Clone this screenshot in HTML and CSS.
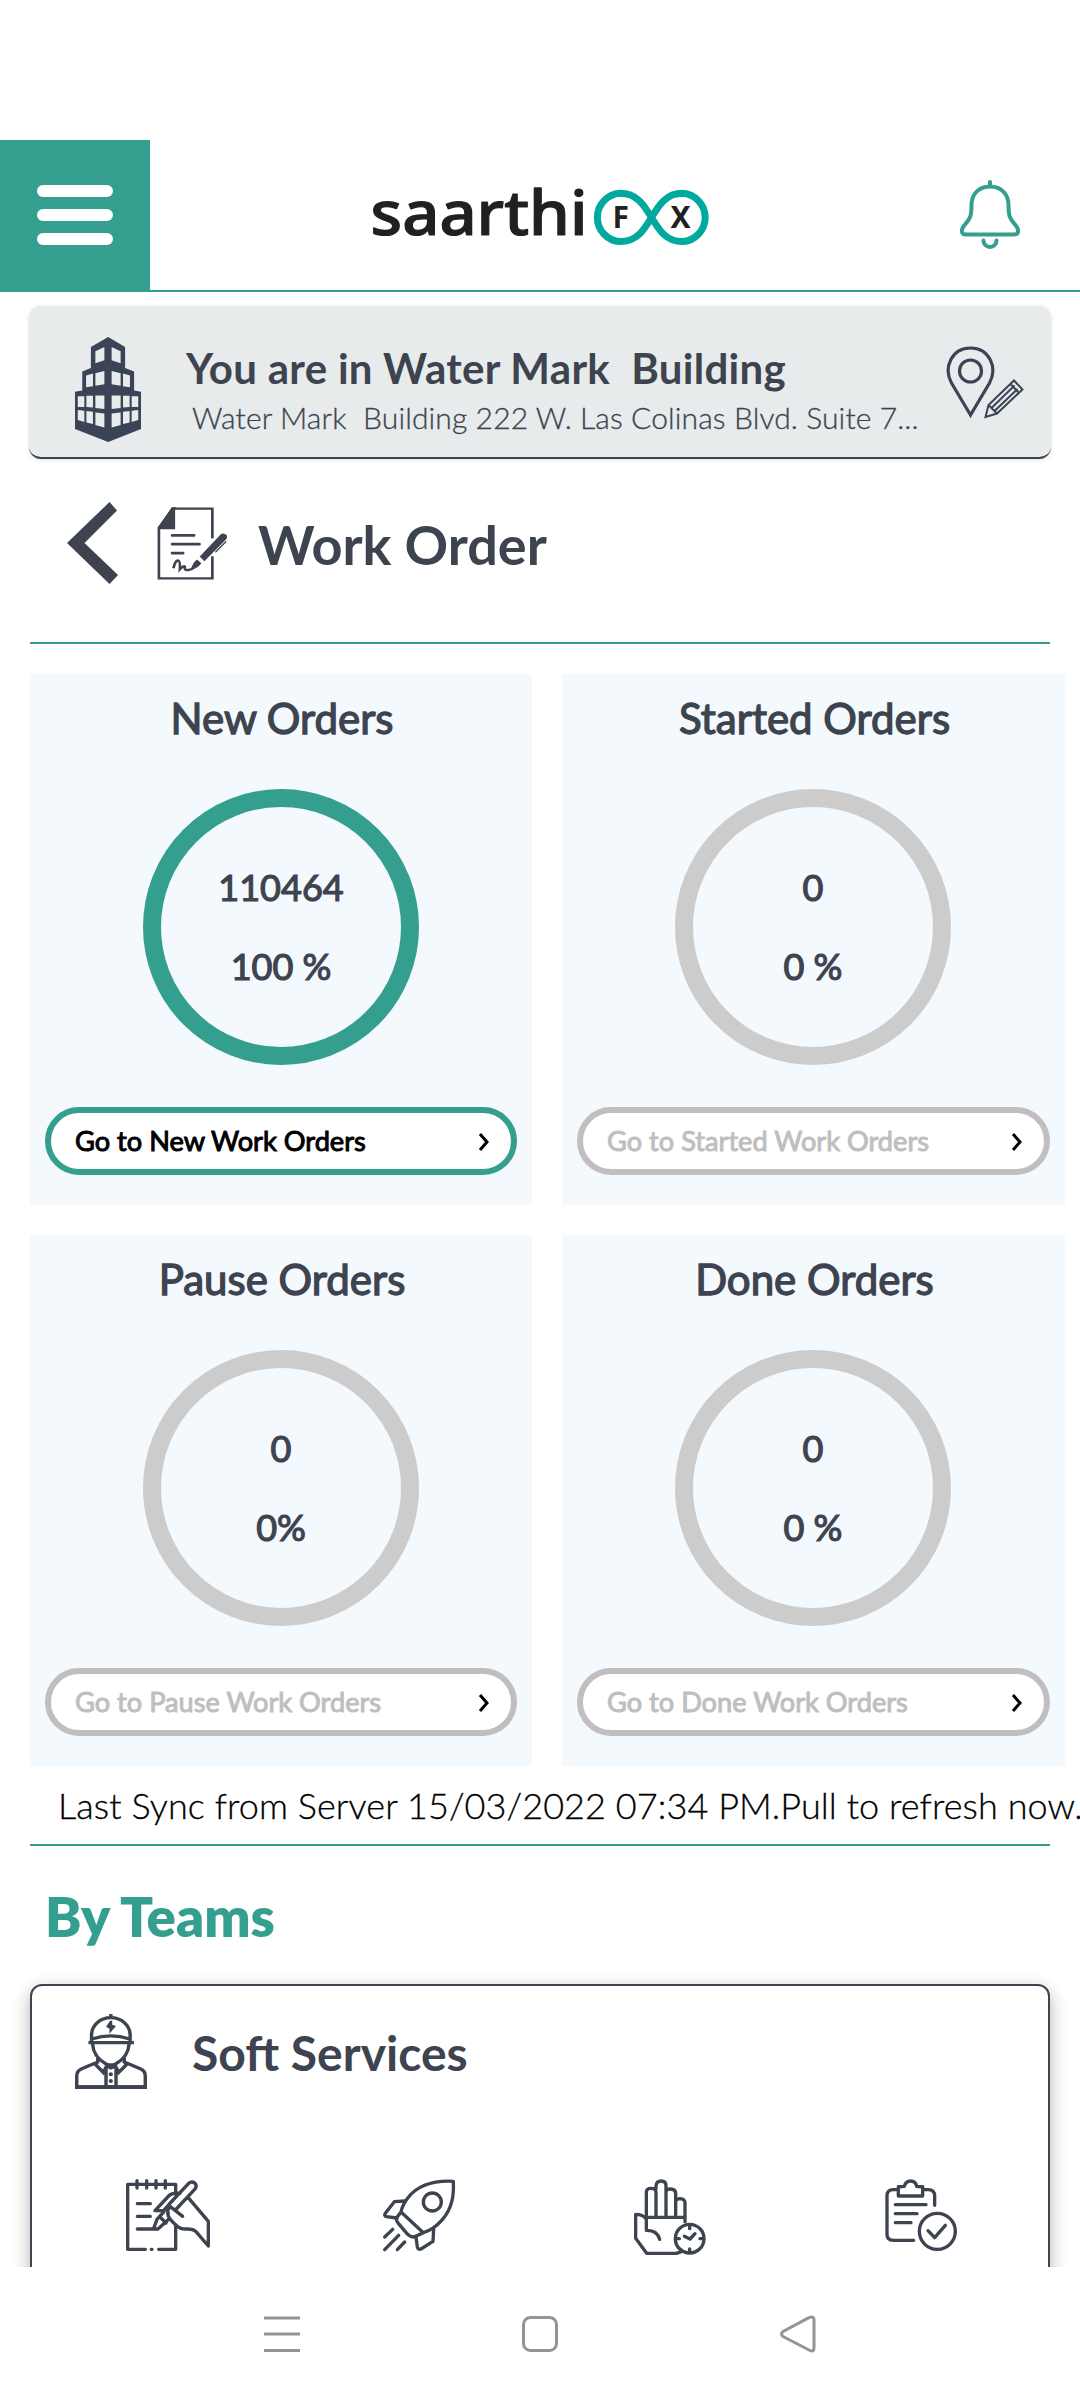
FILE: index.html
```html
<!DOCTYPE html>
<html lang="en">
<head>
<meta charset="utf-8">
<title>Work Order</title>
<link rel="stylesheet" href="styles.css">
</head>
<body>
<div class="app">
  <header class="topbar">
    <button class="menu" aria-label="Menu"><span></span><span></span><span></span></button>
    <svg class="logo" viewBox="366 180 350 72">
      <text class="logo-word" x="370.500" y="235.5" textLength="217" lengthAdjust="spacingAndGlyphs">saarthi</text>
      <path class="logo-loop" d="M651.5 218.5C644 206 637 194.300 620 194.300A24.200 24.200 0 0 0 620 242.600C637 242.600 644 231 651.500 218.500C659 206 666 194.300 682.500 194.300A24.200 24.200 0 0 1 682.500 242.600C666 242.600 659 231 651.500 218.500Z"/>
      <text class="logo-letter" x="612.5" y="229">F</text>
      <text class="logo-letter" x="670.5" y="229">X</text>
    </svg>
    <svg class="bell" viewBox="0 0 60 70">
      <path d="M30 2V6M30 6.500C18 6.500 11.500 15 11.500 25C11.500 35 10.500 39 5 44.500C0 50 1.500 54.500 6 54.500H54C58.500 54.500 60 50 55 44.500C49.500 39 48.500 35 48.500 25C48.500 15 42 6.500 30 6.500Z"/>
      <path d="M23.500 60.500A6.500 6.500 0 0 0 36.500 60.500"/>
    </svg>
  </header>

  <main class="content">
    <section class="location">
      <svg class="tower" viewBox="218 620 191 316" preserveAspectRatio="none">
        <path class="ink" d="M314 620L363 650V713L389 724V781L409 785V897L314 936L218 897V785L239 781V724L264 713V650Z"/>
        <path class="pane" d="M277 663L303 650V690L277 699ZM324 650L350 663V699L324 690ZM250 736L270 730V768L250 771ZM277 729L303 722V762L277 767ZM324 722L350 729V767L324 762ZM357 730L377 736V771L357 768ZM226 798H245V831H226ZM251 797H270V832L251 831ZM277 796H303V837L277 834ZM324 796H350V834L324 837ZM357 797H376V831L357 832ZM382 798H401V831H382ZM226 840L245 842V876L226 870ZM251 843L270 845V882L251 877ZM277 847L303 850V892L277 885ZM324 850L350 847V885L324 892ZM357 845L376 843V877L357 882ZM382 842L401 840V870L382 876Z"/>
      </svg>
      <div class="location-text">
        <h2>You are in Water Mark  Building</h2>
        <p>Water Mark  Building 222 W. Las Colinas Blvd. Suite 7...</p>
      </div>
      <svg class="pin" viewBox="0 0 78 72">
        <path class="thick" d="M24.500 69L5.500 37C-3 21 6 2 24.500 2S52 21 43.500 37Z"/>
        <circle class="thick" cx="24.500" cy="25" r="11"/>
        <path d="M39.500 71L42.500 59L68 34.500L76.500 43.500L51 67.500ZM42.500 59L51 67.500M64.500 38L73 47M68 40L45.500 62M71 43.500L48.500 65"/>
      </svg>
    </section>

    <section class="page-title">
      <svg class="back" viewBox="0 0 51 82"><path d="M0 41L42.500 0L50 8.500L17.500 41L51 73L42.500 82Z"/></svg>
      <svg class="doc" viewBox="409 110 186 218" preserveAspectRatio="none">
        <path class="line" d="M554 203V115H450L414 172V323H554V257M414 173H453V116"/>
        <path class="fill" d="M410 174L448 111H460Q453 120 453 130V174Z"/>
        <path class="bar" d="M449 195H506M449 221H520M449 248H477"/>
        <path class="line" d="M452 293Q457 268 465 270Q470 272 469 296Q479 284 482 288Q480 300 490 298Q499 299 506 290"/>
        <path class="fill" d="M497 298Q503 275 514 267L525 278Q516 294 497 298ZM521 258L577 191Q583 186 592 194Q594 202 589 208L533 272Z"/>
        <path class="clip" d="M563 244L589 214"/>
      </svg>
      <h1>Work Order</h1>
    </section>
    <hr class="rule">

    <section class="orders">
      <article class="order active">
        <h3>New Orders</h3>
        <div class="ring"><span>110464</span><span>100 %</span></div>
        <a class="go">Go to New Work Orders<svg viewBox="0 0 12 20"><path d="M2 2L9 10L2 18"/></svg></a>
      </article>
      <article class="order">
        <h3>Started Orders</h3>
        <div class="ring"><span>0</span><span>0 %</span></div>
        <a class="go">Go to Started Work Orders<svg viewBox="0 0 12 20"><path d="M2 2L9 10L2 18"/></svg></a>
      </article>
      <article class="order">
        <h3>Pause Orders</h3>
        <div class="ring"><span>0</span><span>0%</span></div>
        <a class="go">Go to Pause Work Orders<svg viewBox="0 0 12 20"><path d="M2 2L9 10L2 18"/></svg></a>
      </article>
      <article class="order">
        <h3>Done Orders</h3>
        <div class="ring"><span>0</span><span>0 %</span></div>
        <a class="go">Go to Done Work Orders<svg viewBox="0 0 12 20"><path d="M2 2L9 10L2 18"/></svg></a>
      </article>
    </section>

    <p class="sync">Last Sync from Server 15/03/2022 07:34 PM.Pull to refresh now.</p>
    <hr class="rule">
    <h2 class="teams-title">By Teams</h2>

    <section class="team">
      <div class="team-head">
        <svg class="worker" viewBox="218 822 209 225" preserveAspectRatio="none">
          <path class="line" d="M266 908V885A56 52 0 0 1 378 885V908M267 897Q322 878 377 897M257 908H389M269 912Q271 950 308 972Q322 978 336 972Q373 950 375 912M322 822V832"/>
          <path class="line" d="M284 954V966L236 987Q223 993 223 1008V1041H422V1008Q422 993 409 987L361 966V954M285 962L278 974L300 997L310 978L322 984L335 978L345 997L367 974L360 962M308 985V1040M337 985V1040"/>
          <path class="fill" d="M320 842L308 860L318 866V881L337 858L326 854V842ZM218 1036H427V1047H218Z"/>
          <circle class="fill" cx="322" cy="1003" r="6"/><circle class="fill" cx="322" cy="1023" r="6"/>
        </svg>
        <h3>Soft Services</h3>
      </div>
      <div class="stages">
        <svg viewBox="78 86 252 228" class="stage">
          <path d="M136 297H83V102H227V128M227 224V297H176M154 297H156M111 91V113M140 91V113M168 91V113M196 91V113M112 160H151M112 198H151M112 236H174L206 207"/>
          <path d="M229 176L286 115Q292 105 284 98Q275 92 266 99L208 161L191 181H165L206 137Q215 127 240 129M192 184L171 207L161 234M183 203L198 218M205 190Q199 180 211 169L248 198M203 190Q205 205 230 226Q240 237 259 236Q279 235 288 244L325 287V213L264 141"/>
        </svg>
        <svg viewBox="849 86 216 228" class="stage narrow">
          <path d="M1060 93C1000 90 954 104 924 142Q907 163 903 185L891 201Q886 208 895 219L923 252Q936 264 947 258L970 247Q1000 239 1027 208C1057 173 1062 135 1060 93ZM903 185L970 247"/>
          <circle cx="997" cy="155" r="27"/>
          <path d="M915 152L883 154L856 189Q851 196 859 199L891 203M1001 236L999 273L963 296Q954 299 952 290L948 260M878 237L854 260M896 255L854 298M914 275L892 298"/>
        </svg>
        <svg viewBox="102 86 216 228" class="stage narrow">
          <path d="M139 237V126Q139 114 153 114Q168 114 168 126V199M168 116V106Q170 92 183 92Q198 92 198 106V199M198 122Q202 116 211 116Q227 116 227 130V199M228 150Q232 145 240 145Q255 146 255 158V214M139 201H255M139 207Q130 192 107 192V264L140 309H229L244 304M139 240Q172 239 179 267"/>
          <circle cx="269" cy="265" r="43"/>
          <path d="M269 225V235M269 296V306M229 265H238M300 265H310M253 258L270 266L285 250"/>
        </svg>
        <svg viewBox="855 86 216 228" class="stage narrow">
          <path d="M893 118H880Q861 118 861 137V252Q861 270 880 270H941M970 118H984Q1004 118 1004 137V165M895 109Q900 110 913 108Q917 92 932 92Q947 92 950 108Q960 110 968 109V137H895ZM886 163H978M886 190H951M886 217H933"/>
          <circle cx="1012" cy="243" r="54"/>
          <path d="M984 241L1004 262L1036 225"/>
        </svg>
      </div>
    </section>
  </main>

  <nav class="sysnav">
    <svg viewBox="0 0 36 36"><path d="M0 2H36M0 18H36M0 34.500H36"/></svg>
    <svg viewBox="0 0 36 36"><rect x="1.500" y="1.500" width="33" height="33" rx="7"/></svg>
    <svg viewBox="0 0 36 36"><path d="M3 15.500L29 1.600Q34 -.5 34 4V32Q34 36.500 29 34L3 20.500Q0 18 3 15.500Z"/></svg>
  </nav>
</div>
</body>
</html>
```
FILE: styles.css
```css
* { box-sizing: border-box; }

body {
  margin: 0;
  background: #fff;
  color: #3d434f;
  font-family: Lato, "Liberation Sans", sans-serif;
  line-height: 1.2;
}

h1, h2, h3, p { margin: 0; }

svg {
  display: block;
  flex: none;
  overflow: visible;
  fill: none;
  stroke-linecap: round;
  stroke-linejoin: round;
}

.app {
  display: flex;
  flex-direction: column;
  width: 1080px;
  height: 2400px;
  padding-top: 140px;
  overflow: hidden;
}

/* Top bar */
.topbar {
  display: flex;
  flex: none;
  align-items: center;
  height: 152px;
  border-bottom: 2px solid #349f8e;
}

.menu {
  display: flex;
  flex-direction: column;
  justify-content: center;
  gap: 12px;
  width: 150px;
  height: 150px;
  padding: 0 37px;
  border: 0;
  background: #349f8e;
}

.menu span {
  height: 12px;
  border-radius: 6px;
  background: #fff;
}

.logo {
  width: 350px;
  height: 72px;
  margin-left: 216px;
}

.logo-word {
  fill: #231f20;
  stroke: #231f20;
  stroke-width: 1.2px;
  font: 500 62px "Noto Sans", sans-serif;
}

.logo-loop { stroke: #00a99d; stroke-width: 7px; }

.logo-letter {
  fill: #231f20;
  font: 700 30px "Noto Sans", sans-serif;
}

.bell {
  width: 60px;
  height: 70px;
  margin-left: 244px;
  stroke: #349f8e;
  stroke-width: 4px;
}

/* Scroll area */
.content {
  flex: 1;
  min-height: 0;
  padding-top: 14px;
  overflow: hidden;
}

.location {
  display: flex;
  height: 153px;
  margin: 0 29px;
  padding-left: 46px;
  border-bottom: 2px solid #3b4252;
  border-radius: 12px;
  background: #e7ebec;
  box-shadow: 0 1px 4px rgba(0, 0, 0, .12);
}

.tower { width: 66px; height: 105px; margin-top: 31px; }
.tower .ink { fill: #3b4456; }
.tower .pane { fill: #e7ebec; }

.location-text {
  width: 805px;
  padding: 37px 0 0 45px;
}

.location-text h2 {
  font-size: 42px;
  font-weight: 700;
  letter-spacing: .3px;
  white-space: pre;
}

.location-text p {
  margin: 6px 0 0 6px;
  font-size: 30px;
  font-weight: 300;
  letter-spacing: .11px;
  white-space: pre;
  -webkit-text-stroke: .3px currentColor;
}

.pin {
  width: 78px;
  height: 72px;
  margin-top: 40px;
  stroke: #3b4456;
  stroke-width: 2px;
  stroke-linejoin: miter;
}

.pin .thick { stroke-width: 3.2px; }

.page-title {
  display: flex;
  align-items: center;
  height: 168px;
  margin-bottom: 15px;
  padding-left: 67px;
}

.back { width: 51px; height: 82px; fill: #3d434f; }
.doc { width: 71px; height: 73px; margin-left: 39px; }
.doc .line { stroke: #3d434f; stroke-width: 7px; stroke-linejoin: miter; stroke-linecap: butt; }
.doc .bar { stroke: #3d434f; stroke-width: 8px; }
.doc .fill { fill: #3d434f; }
.doc .clip { stroke: #3d434f; stroke-width: 4px; }

.page-title h1 {
  margin-left: 30px;
  padding-top: 4px;
  font-size: 54px;
  font-weight: 700;
}

.rule {
  height: 2px;
  margin: 0 30px;
  border: 0;
  background: #349f8e;
}

/* Order cards */
.orders {
  display: grid;
  grid-template-columns: 502px 503px;
  gap: 30px;
  margin: 30px 0 0 30px;
}

.order {
  display: flex;
  flex-direction: column;
  align-items: center;
  height: 531px;
  padding: 19px 15px 0;
  background: #f3f9fd;
}

.order h3 {
  height: 50px;
  padding-left: 2px;
  font-size: 42px;
  font-weight: 400;
  -webkit-text-stroke: 1.3px currentColor;
}

.ring {
  display: flex;
  flex-direction: column;
  align-items: center;
  gap: 36px;
  width: 276px;
  height: 276px;
  margin-top: 46px;
  padding-top: 59px;
  border: 18px solid #ccc;
  border-radius: 50%;
  font-size: 36px;
  line-height: 43px;
  -webkit-text-stroke: 1.2px currentColor;
}

.order:nth-child(even) .ring { margin-right: 1px; }

.go {
  display: flex;
  align-items: center;
  justify-content: space-between;
  align-self: stretch;
  height: 68px;
  margin-top: 42px;
  padding: 1px 21px 0 24px;
  border: 6px solid #c0bebf;
  border-radius: 34px;
  background: #fff;
  color: #bfbfbf;
  font-size: 27.2px;
  -webkit-text-stroke: 1px currentColor;
}

.go svg { width: 12px; height: 20px; stroke: #000; stroke-width: 3px; stroke-linecap: butt; stroke-linejoin: miter; }

.active .ring, .active .go { border-color: #349f8e; }
.active .go { color: #000; }

.sync {
  height: 60px;
  margin: 18px 0 0 58px;
  color: #000;
  font-size: 36px;
  font-weight: 300;
  letter-spacing: .07px;
  white-space: nowrap;
  -webkit-text-stroke: .3px currentColor;
}

/* Teams */
.teams-title {
  margin: 37px 0 35px 45px;
  color: #349f8e;
  font-size: 54.5px;
  font-weight: 800;
  line-height: 66px;
}

.team {
  height: 420px;
  margin: 0 30px;
  padding-top: 28px;
  border: 2px solid #3e4450;
  border-radius: 12px;
  background: #fff;
  box-shadow: 0 6px 18px rgba(0, 0, 0, .3);
}

.team-head {
  display: flex;
  align-items: center;
  height: 75px;
  padding-left: 43px;
}

.worker { width: 72px; height: 75px; }
.worker .line { stroke: #3d434f; stroke-width: 10px; stroke-linejoin: miter; stroke-linecap: butt; }
.worker .fill { fill: #3d434f; }

.team-head h3 { margin-left: 45px; padding-top: 2px; font-size: 48px; font-weight: 700; }

.stages {
  display: grid;
  grid-template-columns: repeat(4, 251px);
  justify-content: center;
  justify-items: center;
  margin-top: 90px;
  padding-left: 8px;
}

.stage {
  width: 84px;
  height: 76px;
  stroke: #3d434f;
  stroke-width: 10px;
}

.stage.narrow { width: 72px; }

/* System navigation */
.sysnav {
  display: flex;
  flex: none;
  justify-content: center;
  gap: 222px;
  height: 133px;
  padding-top: 49px;
  background: #fff;
}

.sysnav svg { width: 36px; height: 36px; stroke: #949494; stroke-width: 3px; stroke-linecap: butt; }
```
